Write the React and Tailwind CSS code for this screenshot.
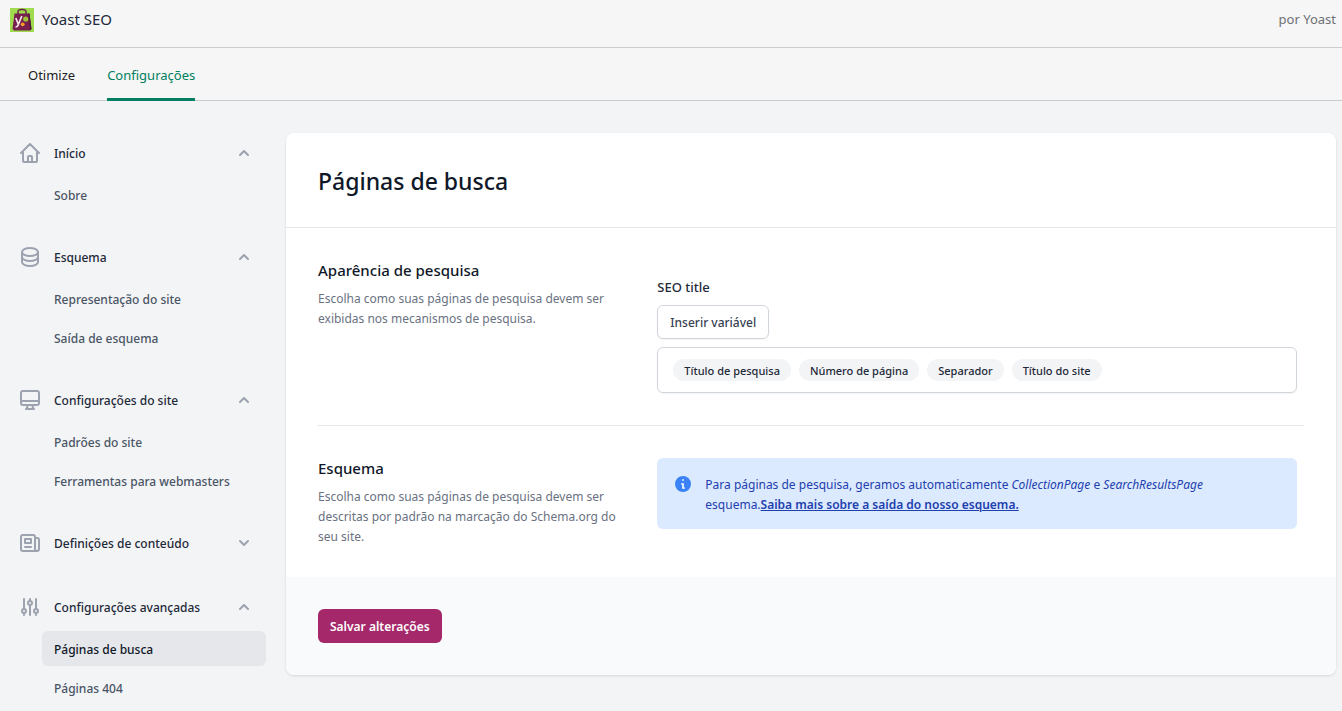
import { HiChevronDown, HiChevronUp, HiInformationCircle, HiOutlineAdjustments, HiOutlineDatabase, HiOutlineDesktopComputer, HiOutlineHome, HiOutlineNewspaper } from "react-icons/hi"

const menu = [
  { label: "Início", icon: HiOutlineHome, open: true, items: ["Sobre"] },
  { label: "Esquema", icon: HiOutlineDatabase, open: true, items: ["Representação do site", "Saída de esquema"] },
  { label: "Configurações do site", icon: HiOutlineDesktopComputer, open: true, items: ["Padrões do site", "Ferramentas para webmasters"] },
  { label: "Definições de conteúdo", icon: HiOutlineNewspaper, open: false, items: [] },
  { label: "Configurações avançadas", icon: HiOutlineAdjustments, open: true, items: ["Páginas de busca", "Páginas 404"] },
]

const variables = ["Título de pesquisa", "Número de página", "Separador", "Título do site"]

function Logo() {
  return (
    <svg viewBox="0 0 24 24" className="size-6" aria-hidden="true">
      <rect width="24" height="24" fill="#9fda4f" />
      <path d="M8 6V3.8C8 2.4 9.2 1.6 12 1.6s4 .8 4 2.2V6" fill="none" stroke="#6c2548" strokeWidth="1.5" />
      <path d="M4.5 5.5h15L21.5 21 20 22.6H4L2.5 21z" fill="#77204e" />
      <path d="M19.5 5.5 21.5 21 20 22.6 18.4 5.5z" fill="#4f1835" />
      <path d="M5.8 10l2.6 6.4M11.8 8 8.2 17c-.6 1.5-1.3 2-2.7 2" fill="none" stroke="#f3e3ec" strokeWidth="1.7" />
      <circle cx="15.7" cy="11" r="2.6" fill="#9bc536" />
      <circle cx="12.7" cy="16.3" r="1.9" fill="#f5a02b" />
    </svg>
  )
}

function MenuGroup({ label, icon: Icon, open, items }) {
  const Chevron = open ? HiChevronUp : HiChevronDown

  return (
    <div>
      <button type="button" aria-expanded={open} className="flex h-10 w-full items-center gap-3 pr-3 text-left text-gray-800">
        <Icon size={24} className="text-[#9ca3af]" />
        <span className="flex-1 pt-0.5">{label}</span>
        <Chevron size={20} className="text-[#9ca3af]" />
      </button>
      {open && (
        <ul className="flex flex-col gap-1 pt-1 pb-px pl-6">
          {items.map((item) => (
            <li key={item}>
              <a
                href="#"
                className={
                  item === "Páginas de busca"
                    ? "flex h-[35px] items-center rounded-md bg-gray-200 px-3 pt-0.5 text-gray-900"
                    : "flex h-[35px] items-center rounded-md px-3 pt-0.5 text-gray-600"
                }
              >
                {item}
              </a>
            </li>
          ))}
        </ul>
      )}
    </div>
  )
}

function Section({ title, description, children }) {
  return (
    <section className="grid grid-cols-3 gap-8">
      <div>
        <h2 className="text-[15px] leading-5 font-medium text-gray-900">{title}</h2>
        <p className="mt-[9px] text-xs leading-5 text-gray-500">{description}</p>
      </div>
      <div className="col-span-2 max-w-[640px]">{children}</div>
    </section>
  )
}

export default function App() {
  return (
    <div className="min-h-screen bg-gray-100 font-['Noto_Sans','Open_Sans',sans-serif] text-[13px]">
      <header className="flex h-12 items-center justify-between border-b border-[#c9cccf] bg-[#f6f6f6] pr-1.5 pb-2 pl-2.5">
        <div className="flex items-center gap-2 text-[15px] text-gray-800">
          <Logo />
          <h1>Yoast SEO</h1>
        </div>
        <span className="text-[#6d7175]">por Yoast</span>
      </header>

      <nav className="flex h-[53px] gap-8 border-b border-[#c9cccf] bg-[#f6f6f6] px-7">
        <a href="#" className="flex h-[53px] items-center pt-0.5 text-[#202223]">Otimize</a>
        <a href="#" className="flex h-[53px] items-center border-b-3 border-[#008060] pt-[5px] text-[#008060]">Configurações</a>
      </nav>

      <div className="flex items-start gap-5 pt-8 pr-1.5 pl-[18px]">
        <aside className="w-[248px] shrink-0 text-xs font-medium">
          <nav className="flex flex-col gap-6">
            {menu.map((group) => (
              <MenuGroup key={group.label} {...group} />
            ))}
          </nav>
        </aside>

        <main className="min-w-0 flex-1 overflow-hidden rounded-lg bg-white shadow-sm">
          <div className="border-b border-gray-200 px-8 pt-[33px] pb-[31px]">
            <h1 className="text-[23px] leading-[30px] font-medium text-gray-900">Páginas de busca</h1>
          </div>

          <form>
            <div className="px-8 pt-8 pb-[30px]">
              <Section
                title="Aparência de pesquisa"
                description="Escolha como suas páginas de pesquisa devem ser exibidas nos mecanismos de pesquisa."
              >
                <span id="seo-title-label" className="mt-[17px] block leading-5 font-medium text-gray-800">SEO title</span>
                <button type="button" className="mt-2 h-[34px] rounded-md border border-gray-300 px-3 pt-0.5 text-xs font-medium text-gray-700 shadow-xs">
                  Inserir variável
                </button>
                <div
                  role="textbox"
                  aria-labelledby="seo-title-label"
                  tabIndex={0}
                  className="mt-2 flex h-[46px] items-center gap-2 rounded-md border border-gray-300 px-[15px] shadow-xs"
                >
                  {variables.map((name) => (
                    <span key={name} className="rounded-full bg-gray-100 px-[11px] pt-0.5 text-[11px] leading-5 font-medium text-gray-800">
                      {name}
                    </span>
                  ))}
                </div>
              </Section>

              <hr className="my-8 border-gray-200" />

              <Section
                title="Esquema"
                description="Escolha como suas páginas de pesquisa devem ser descritas por padrão na marcação do Schema.org do seu site."
              >
                <div className="flex gap-3 rounded-md bg-blue-100 px-4 pt-4 pb-3.5 text-xs text-[#1e40af]">
                  <HiInformationCircle size={20} className="shrink-0 text-[#3b82f6]" />
                  <p className="pt-px leading-5">
                    Para páginas de pesquisa, geramos automaticamente <em>CollectionPage</em> e <em>SearchResultsPage</em>{" "}
                    esquema.<a href="#" className="font-semibold underline">Saiba mais sobre a saída do nosso esquema.</a>
                  </p>
                </div>
              </Section>
            </div>

            <div className="bg-gray-50 p-8">
              <button type="submit" className="block h-[34px] rounded-md bg-[#a4286a] px-3 pt-0.5 text-xs font-semibold text-white">
                Salvar alterações
              </button>
            </div>
          </form>
        </main>
      </div>
    </div>
  )
}
